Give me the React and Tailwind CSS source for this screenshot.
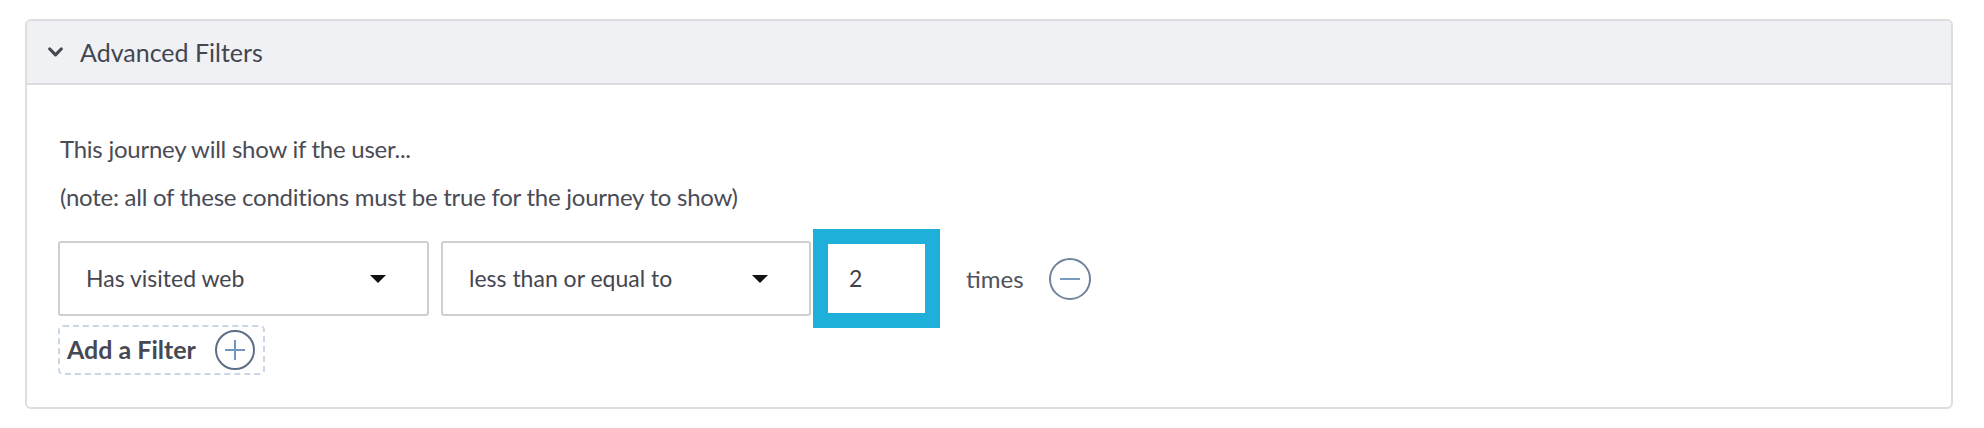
import React from "react";

const font = { fontFamily: "Lato, 'Open Sans', sans-serif" };

function Caret() {
  return (
    <svg width="16" height="8" viewBox="0 0 16 8" className="shrink-0">
      <path d="M0 0 H16 L8 8 Z" fill="#111" />
    </svg>
  );
}

function Select({ label, width }) {
  return (
    <div
      className={`flex items-center justify-between h-[75px] border-2 border-[#cfcfcf] rounded-[3px] bg-white pl-[26px] pr-[41px] ${width}`}
    >
      <span className="text-[23px] text-[#45464f]">{label}</span>
      <Caret />
    </div>
  );
}

export default function App() {
  return (
    <div className="bg-white w-[1984px] h-[428px] pt-[19px] pl-[25px]" style={font}>
      <div className="w-[1928px] h-[390px] border-2 border-[#dedede] rounded-[6px] overflow-hidden">
        <div className="h-[64px] bg-[#f0f1f4] border-b-2 border-[#dcdcdc] flex items-center pl-[21px]">
          <svg width="15" height="10" viewBox="0 0 15 10" className="mr-[17px]">
            <path d="M1.8 2 L7.5 7.8 L13.2 2" fill="none" stroke="#45474f" strokeWidth="3.2" strokeLinecap="round" strokeLinejoin="round" />
          </svg>
          <span className="text-[25px] text-[#44464f] leading-none">Advanced Filters</span>
        </div>
        <div className="pl-[31px] pt-[40px]">
          <div className="pl-[2px] text-[24px] tracking-[-0.25px] leading-[48px] text-[#4a4b55]">
            <p>This journey will show if the user...</p>
            <p>(note: all of these conditions must be true for the journey to show)</p>
          </div>
          <div className="flex items-center mt-[8px] h-[99px]">
            <Select label="Has visited web" width="w-[371px]" />
            <div className="w-[12px]" />
            <Select label="less than or equal to" width="w-[370px]" />
            <div className="w-[2px]" />
            <div className="w-[127px] h-[99px] border-[15px] border-[#1eb0d9] bg-white flex items-center pl-[21px]">
              <span className="text-[23px] text-[#3f4049]">2</span>
            </div>
            <span className="ml-[26px] text-[24px] text-[#50525c]">times</span>
            <div className="ml-[25px] w-[42px] h-[42px] rounded-full border-2 border-[#71849b] flex items-center justify-center">
              <div className="w-[20px] h-[2px] bg-[#7a9bc0]" />
            </div>
          </div>
          <div className="mt-[-3px] w-[207px] h-[50px] border-2 border-dashed border-[#c9d6e6] rounded-[5px] flex items-center pl-[7px]">
            <span className="text-[25px] font-bold text-[#464854]">Add a Filter</span>
            <div className="ml-[19px] w-[40px] h-[40px] rounded-full border-2 border-[#5e6e86] relative flex items-center justify-center">
              <div className="absolute w-[20px] h-[2px] bg-[#7196c0]" />
              <div className="absolute w-[2px] h-[20px] bg-[#7196c0]" />
            </div>
          </div>
        </div>
      </div>
    </div>
  );
}
